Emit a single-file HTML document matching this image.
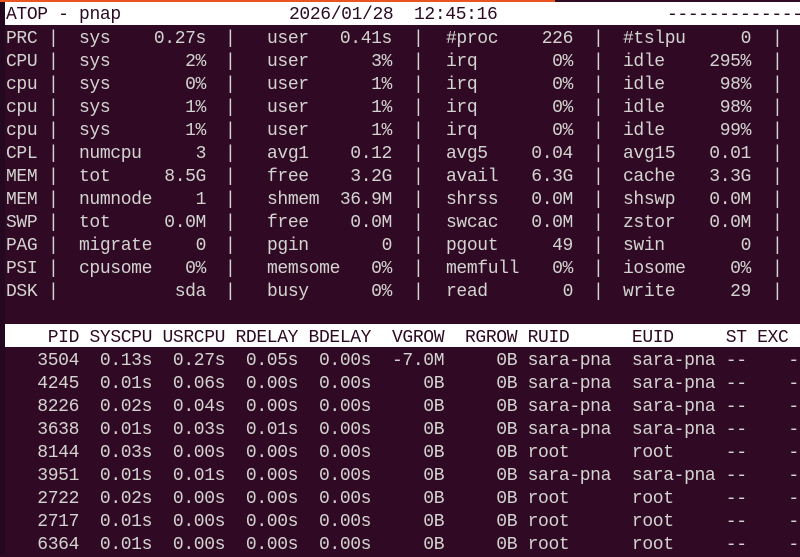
<!DOCTYPE html>
<html><head><meta charset="utf-8"><style>
html,body{margin:0;padding:0;}
body{width:800px;height:554px;background:#300a24;position:relative;overflow:hidden;font-family:"Liberation Mono",monospace;font-size:18px;letter-spacing:-0.37px;color:#d3d3d0;}
.strip{position:absolute;left:0;top:0;width:5px;height:554px;background:#240820;}
.orange{position:absolute;left:0;top:0;width:555px;height:2px;background:#e95420;}
.band{position:absolute;left:5px;width:795px;height:23px;background:#ffffff;}
.r{position:absolute;left:0;width:800px;height:23px;line-height:23px;white-space:pre;transform:translateY(3px);}
.r span{position:absolute;top:0;}
.dk{color:#2c0a22;}
.l{left:6px}
.p1{left:48px}.p2{left:225px}.p3{left:413px}.p4{left:593px}.p5{left:772px}
.n1{left:79px}.n2{left:267px}.n3{left:446px}.n4{left:623px}
.v1{right:594px}.v2{right:408px}.v3{right:227px}.v4{right:49px}
pre{margin:0;position:absolute;left:6px;font:inherit;line-height:23px;transform:translateY(3px);}
</style></head><body>
<div class="strip"></div>
<div class="orange"></div>
<div class="band" style="top:2px"></div>
<div class="r dk" style="top:1px"><span style="left:6px">ATOP - pnap</span><span style="left:289px">2026/01/28</span><span style="left:414px">12:45:16</span><span style="left:667px">-------------</span></div>

<div class="r" style="top:25px"><span class="l">PRC</span><span class="p1">|</span><span class="n1">sys</span><span class="v1">0.27s</span><span class="p2">|</span><span class="n2">user</span><span class="v2">0.41s</span><span class="p3">|</span><span class="n3">#proc</span><span class="v3">226</span><span class="p4">|</span><span class="n4">#tslpu</span><span class="v4">0</span><span class="p5">|</span></div>
<div class="r" style="top:48px"><span class="l">CPU</span><span class="p1">|</span><span class="n1">sys</span><span class="v1">2%</span><span class="p2">|</span><span class="n2">user</span><span class="v2">3%</span><span class="p3">|</span><span class="n3">irq</span><span class="v3">0%</span><span class="p4">|</span><span class="n4">idle</span><span class="v4">295%</span><span class="p5">|</span></div>
<div class="r" style="top:71px"><span class="l">cpu</span><span class="p1">|</span><span class="n1">sys</span><span class="v1">0%</span><span class="p2">|</span><span class="n2">user</span><span class="v2">1%</span><span class="p3">|</span><span class="n3">irq</span><span class="v3">0%</span><span class="p4">|</span><span class="n4">idle</span><span class="v4">98%</span><span class="p5">|</span></div>
<div class="r" style="top:94px"><span class="l">cpu</span><span class="p1">|</span><span class="n1">sys</span><span class="v1">1%</span><span class="p2">|</span><span class="n2">user</span><span class="v2">1%</span><span class="p3">|</span><span class="n3">irq</span><span class="v3">0%</span><span class="p4">|</span><span class="n4">idle</span><span class="v4">98%</span><span class="p5">|</span></div>
<div class="r" style="top:117px"><span class="l">cpu</span><span class="p1">|</span><span class="n1">sys</span><span class="v1">1%</span><span class="p2">|</span><span class="n2">user</span><span class="v2">1%</span><span class="p3">|</span><span class="n3">irq</span><span class="v3">0%</span><span class="p4">|</span><span class="n4">idle</span><span class="v4">99%</span><span class="p5">|</span></div>
<div class="r" style="top:140px"><span class="l">CPL</span><span class="p1">|</span><span class="n1">numcpu</span><span class="v1">3</span><span class="p2">|</span><span class="n2">avg1</span><span class="v2">0.12</span><span class="p3">|</span><span class="n3">avg5</span><span class="v3">0.04</span><span class="p4">|</span><span class="n4">avg15</span><span class="v4">0.01</span><span class="p5">|</span></div>
<div class="r" style="top:163px"><span class="l">MEM</span><span class="p1">|</span><span class="n1">tot</span><span class="v1">8.5G</span><span class="p2">|</span><span class="n2">free</span><span class="v2">3.2G</span><span class="p3">|</span><span class="n3">avail</span><span class="v3">6.3G</span><span class="p4">|</span><span class="n4">cache</span><span class="v4">3.3G</span><span class="p5">|</span></div>
<div class="r" style="top:186px"><span class="l">MEM</span><span class="p1">|</span><span class="n1">numnode</span><span class="v1">1</span><span class="p2">|</span><span class="n2">shmem</span><span class="v2">36.9M</span><span class="p3">|</span><span class="n3">shrss</span><span class="v3">0.0M</span><span class="p4">|</span><span class="n4">shswp</span><span class="v4">0.0M</span><span class="p5">|</span></div>
<div class="r" style="top:209px"><span class="l">SWP</span><span class="p1">|</span><span class="n1">tot</span><span class="v1">0.0M</span><span class="p2">|</span><span class="n2">free</span><span class="v2">0.0M</span><span class="p3">|</span><span class="n3">swcac</span><span class="v3">0.0M</span><span class="p4">|</span><span class="n4">zstor</span><span class="v4">0.0M</span><span class="p5">|</span></div>
<div class="r" style="top:232px"><span class="l">PAG</span><span class="p1">|</span><span class="n1">migrate</span><span class="v1">0</span><span class="p2">|</span><span class="n2">pgin</span><span class="v2">0</span><span class="p3">|</span><span class="n3">pgout</span><span class="v3">49</span><span class="p4">|</span><span class="n4">swin</span><span class="v4">0</span><span class="p5">|</span></div>
<div class="r" style="top:255px"><span class="l">PSI</span><span class="p1">|</span><span class="n1">cpusome</span><span class="v1">0%</span><span class="p2">|</span><span class="n2">memsome</span><span class="v2">0%</span><span class="p3">|</span><span class="n3">memfull</span><span class="v3">0%</span><span class="p4">|</span><span class="n4">iosome</span><span class="v4">0%</span><span class="p5">|</span></div>
<div class="r" style="top:278px"><span class="l">DSK</span><span class="p1">|</span><span class="v1">sda</span><span class="p2">|</span><span class="n2">busy</span><span class="v2">0%</span><span class="p3">|</span><span class="n3">read</span><span class="v3">0</span><span class="p4">|</span><span class="n4">write</span><span class="v4">29</span><span class="p5">|</span></div>

<div class="band" style="top:324px"></div>
<pre class="dk" style="top:324px">    PID SYSCPU USRCPU RDELAY BDELAY  VGROW  RGROW RUID      EUID     ST EXC</pre>
<pre style="top:347px">   3504  0.13s  0.27s  0.05s  0.00s  -7.0M     0B sara-pna  sara-pna --    -
   4245  0.01s  0.06s  0.00s  0.00s     0B     0B sara-pna  sara-pna --    -
   8226  0.02s  0.04s  0.00s  0.00s     0B     0B sara-pna  sara-pna --    -
   3638  0.01s  0.03s  0.01s  0.00s     0B     0B sara-pna  sara-pna --    -
   8144  0.03s  0.00s  0.00s  0.00s     0B     0B root      root     --    -
   3951  0.01s  0.01s  0.00s  0.00s     0B     0B sara-pna  sara-pna --    -
   2722  0.02s  0.00s  0.00s  0.00s     0B     0B root      root     --    -
   2717  0.01s  0.00s  0.00s  0.00s     0B     0B root      root     --    -
   6364  0.01s  0.00s  0.00s  0.00s     0B     0B root      root     --    -</pre>
</body></html>
